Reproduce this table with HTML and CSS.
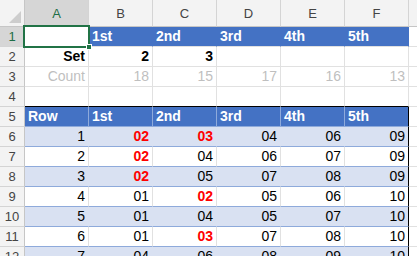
FILE: index.html
```html
<!DOCTYPE html>
<html lang="en">
  <head>
    <meta charset="UTF-8" />
    <meta name="viewport" content="width=device-width, initial-scale=1.0" />
    <title>Draw Counts</title>
    <link rel="stylesheet" href="styles.css">
  </head>
  <body>
    <div id="wrap">
      <div class="sheet">
        <!-- column letters -->
        <div class="corner"></div>
        <div class="col sel">A</div>
        <div class="col">B</div>
        <div class="col">C</div>
        <div class="col">D</div>
        <div class="col">E</div>
        <div class="col">F</div>
        <div class="col">G</div>

        <!-- 1: slot labels -->
        <div class="rh sel">1</div>
        <div class="c"></div>
        <div class="c bar">1st</div>
        <div class="c bar">2nd</div>
        <div class="c bar">3rd</div>
        <div class="c bar">4th</div>
        <div class="c bar">5th</div>
        <div class="c"></div>

        <!-- 2: picked set -->
        <div class="rh">2</div>
        <div class="c r b">Set</div>
        <div class="c r b">2</div>
        <div class="c r b">3</div>
        <div class="c"></div>
        <div class="c"></div>
        <div class="c"></div>
        <div class="c"></div>

        <!-- 3: counts -->
        <div class="rh">3</div>
        <div class="c r mut">Count</div>
        <div class="c r mut">18</div>
        <div class="c r mut">15</div>
        <div class="c r mut">17</div>
        <div class="c r mut">16</div>
        <div class="c r mut">13</div>
        <div class="c"></div>

        <div class="rh">4</div>
        <div class="c top"></div>
        <div class="c top"></div>
        <div class="c top"></div>
        <div class="c top"></div>
        <div class="c top"></div>
        <div class="c top"></div>
        <div class="c"></div>

        <!-- 5: table header -->
        <div class="rh">5</div>
        <div class="c th">Row</div>
        <div class="c th">1st</div>
        <div class="c th">2nd</div>
        <div class="c th">3rd</div>
        <div class="c th">4th</div>
        <div class="c th edge">5th</div>
        <div class="c"></div>

        <div class="rh">6</div>
        <div class="c r band">1</div>
        <div class="c r band hit">02</div>
        <div class="c r band hit">03</div>
        <div class="c r band">04</div>
        <div class="c r band">06</div>
        <div class="c r band edge">09</div>
        <div class="c"></div>

        <div class="rh">7</div>
        <div class="c r plain">2</div>
        <div class="c r plain hit">02</div>
        <div class="c r plain">04</div>
        <div class="c r plain">06</div>
        <div class="c r plain">07</div>
        <div class="c r plain edge">09</div>
        <div class="c"></div>

        <div class="rh">8</div>
        <div class="c r band">3</div>
        <div class="c r band hit">02</div>
        <div class="c r band">05</div>
        <div class="c r band">07</div>
        <div class="c r band">08</div>
        <div class="c r band edge">09</div>
        <div class="c"></div>

        <div class="rh">9</div>
        <div class="c r plain">4</div>
        <div class="c r plain">01</div>
        <div class="c r plain hit">02</div>
        <div class="c r plain">05</div>
        <div class="c r plain">06</div>
        <div class="c r plain edge">10</div>
        <div class="c"></div>

        <div class="rh">10</div>
        <div class="c r band">5</div>
        <div class="c r band">01</div>
        <div class="c r band">04</div>
        <div class="c r band">05</div>
        <div class="c r band">07</div>
        <div class="c r band edge">10</div>
        <div class="c"></div>

        <div class="rh">11</div>
        <div class="c r plain">6</div>
        <div class="c r plain">01</div>
        <div class="c r plain hit">03</div>
        <div class="c r plain">07</div>
        <div class="c r plain">08</div>
        <div class="c r plain edge">10</div>
        <div class="c"></div>

        <div class="rh">12</div>
        <div class="c r band">7</div>
        <div class="c r band">04</div>
        <div class="c r band">06</div>
        <div class="c r band">08</div>
        <div class="c r band">09</div>
        <div class="c r band edge">10</div>
        <div class="c"></div>
      </div>

      <!-- active cell outline with fill handle -->
      <div class="cursor"></div>
      <div class="handle"></div>
    </div>
  </body>
</html>
```

FILE: styles.css
```css
* {
  margin: 0;
  padding: 0;
  box-sizing: border-box;
}

body {
  font-family: "Liberation Sans", Arial, sans-serif;
  font-size: 14px;
  background-color: #ffffff;
  overflow: hidden;
}

#wrap {
  position: relative;
  width: 417px;
  height: 256px;
  overflow: hidden;
}

.sheet {
  display: grid;
  grid-template-columns: 25px repeat(7, 64px);
  grid-template-rows: 27px;
  grid-auto-rows: 20px;
}

/* headers */
.corner {
  position: relative;
  background-color: #f3f3f3;
  border-right: 1px solid #c6c6c6;
  border-bottom: 1px solid #c6c6c6;
}

.corner::after {
  content: "";
  position: absolute;
  right: 3px;
  bottom: 3px;
  width: 12px;
  height: 12px;
  background-color: #cdcdcd;
  clip-path: polygon(100% 0, 100% 100%, 0 100%);
}

.col {
  background-color: #f3f3f3;
  border-right: 1px solid #d4d4d4;
  border-bottom: 1px solid #c6c6c6;
  color: #444444;
  font-size: 13px;
  text-align: center;
  line-height: 28px;
}

.rh {
  background-color: #f3f3f3;
  border-right: 1px solid #c6c6c6;
  border-bottom: 1px solid #d4d4d4;
  color: #444444;
  font-size: 13px;
  text-align: center;
  line-height: 20px;
}

.col.sel,
.rh.sel {
  background-color: #d6d6d6;
  color: #1e6e46;
}

/* cells */
.c {
  border-right: 1px solid #e1e1e1;
  border-bottom: 1px solid #e1e1e1;
  padding: 0 3px;
  line-height: 19px;
  white-space: nowrap;
  overflow: hidden;
  color: #000000;
}

.r {
  text-align: right;
}

.b {
  font-weight: bold;
}

.mut {
  color: #bfbfbf;
}

.bar {
  background-color: #4472c4;
  border-right-color: #4472c4;
  color: #ffffff;
  font-weight: bold;
}

.top {
  border-bottom-color: #000000;
}

.th {
  background-color: #4472c4;
  border-right-color: #8eaadb;
  border-bottom-color: #8eaadb;
  color: #ffffff;
  font-weight: bold;
}

.band {
  background-color: #d9e1f2;
  border-right-color: #d9e1f2;
  border-bottom-color: #8eaadb;
}

.plain {
  border-bottom-color: #8eaadb;
}

.edge {
  border-right-color: #000000;
}

.hit {
  color: #ff0000;
  font-weight: bold;
}

/* selection */
.cursor {
  position: absolute;
  left: 23px;
  top: 25px;
  width: 67px;
  height: 23px;
  border: 2px solid #217346;
}

.handle {
  position: absolute;
  left: 86px;
  top: 44px;
  width: 6px;
  height: 6px;
  background-color: #217346;
  border: 1px solid #ffffff;
}
```
